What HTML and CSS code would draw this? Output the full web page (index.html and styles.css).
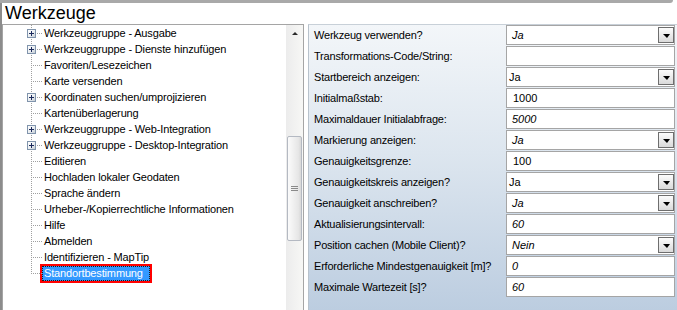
FILE: index.html
```html
<!DOCTYPE html>
<html>
<head>
<meta charset="utf-8">
<link rel="stylesheet" href="styles.css">
</head>
<body>
<div class="topline"></div>
<div class="frame">
  <div class="title">Werkzeuge</div>
  <div class="main">
    <div class="tree">
      <ul class="nodes">
        <li class="node"><span class="pm"></span><span class="lbl">Werkzeuggruppe - Ausgabe</span></li>
        <li class="node"><span class="pm"></span><span class="lbl">Werkzeuggruppe - Dienste hinzufügen</span></li>
        <li class="node leaf"><span class="lbl">Favoriten/Lesezeichen</span></li>
        <li class="node leaf"><span class="lbl">Karte versenden</span></li>
        <li class="node"><span class="pm"></span><span class="lbl">Koordinaten suchen/umprojizieren</span></li>
        <li class="node leaf"><span class="lbl">Kartenüberlagerung</span></li>
        <li class="node"><span class="pm"></span><span class="lbl">Werkzeuggruppe - Web-Integration</span></li>
        <li class="node"><span class="pm"></span><span class="lbl">Werkzeuggruppe - Desktop-Integration</span></li>
        <li class="node leaf"><span class="lbl">Editieren</span></li>
        <li class="node leaf"><span class="lbl">Hochladen lokaler Geodaten</span></li>
        <li class="node leaf"><span class="lbl">Sprache ändern</span></li>
        <li class="node leaf"><span class="lbl">Urheber-/Kopierrechtliche Informationen</span></li>
        <li class="node leaf"><span class="lbl">Hilfe</span></li>
        <li class="node leaf"><span class="lbl">Abmelden</span></li>
        <li class="node leaf"><span class="lbl">Identifizieren - MapTip</span></li>
        <li class="node leaf last"><span class="lbl sel">Standortbestimmung</span></li>
      </ul>
      <div class="vscroll">
        <div class="arrow-up"></div>
        <div class="thumb"><div class="grip"></div></div>
      </div>
    </div>
    <div class="props">
      <div class="row"><div class="label">Werkzeug verwenden?</div><div class="value"><span class="txt it">Ja</span><span class="btn"></span></div></div>
      <div class="row"><div class="label">Transformations-Code/String:</div><div class="value"></div></div>
      <div class="row"><div class="label">Startbereich anzeigen:</div><div class="value"><span class="txt dn">Ja</span><span class="btn"></span></div></div>
      <div class="row"><div class="label">Initialmaßstab:</div><div class="value"><span class="txt nm">1000</span></div></div>
      <div class="row"><div class="label">Maximaldauer Initialabfrage:</div><div class="value"><span class="txt it">5000</span></div></div>
      <div class="row"><div class="label">Markierung anzeigen:</div><div class="value"><span class="txt it">Ja</span><span class="btn"></span></div></div>
      <div class="row"><div class="label">Genauigkeitsgrenze:</div><div class="value"><span class="txt nm">100</span></div></div>
      <div class="row"><div class="label">Genauigkeitskreis anzeigen?</div><div class="value"><span class="txt dn">Ja</span><span class="btn"></span></div></div>
      <div class="row"><div class="label">Genauigkeit anschreiben?</div><div class="value"><span class="txt it">Ja</span><span class="btn"></span></div></div>
      <div class="row"><div class="label">Aktualisierungsintervall:</div><div class="value"><span class="txt it">60</span></div></div>
      <div class="row"><div class="label">Position cachen (Mobile Client)?</div><div class="value"><span class="txt it">Nein</span><span class="btn"></span></div></div>
      <div class="row"><div class="label">Erforderliche Mindestgenauigkeit [m]?</div><div class="value"><span class="txt it">0</span></div></div>
      <div class="row"><div class="label">Maximale Wartezeit [s]?</div><div class="value"><span class="txt it">60</span></div></div>
    </div>
  </div>
</div>
</body>
</html>
```
FILE: styles.css
```css
html, body {
  margin: 0;
  padding: 0;
}
body {
  width: 677px;
  height: 310px;
  overflow: hidden;
  background: #ffffff;
  font-family: "Liberation Sans", Arial, sans-serif;
  color: #000;
}
.topline {
  height: 3px;
  margin-right: 4px;
  background: #a9a9a9;
  border-bottom-right-radius: 3px;
}
.frame {
  height: 307px;
  border-left: 2px solid #8c8c8c;
  box-sizing: border-box;
  display: flex;
  flex-direction: column;
}
.title {
  height: 21px;
  line-height: 21px;
  padding-left: 3px;
  font-size: 18px;
  flex: none;
}
.main {
  flex: 1;
  display: flex;
  min-height: 0;
}
.tree {
  width: 302px;
  box-sizing: border-box;
  border: 1px solid #a5a5a5;
  border-bottom: none;
  display: flex;
  flex: none;
}
.nodes {
  list-style: none;
  margin: 0;
  padding: 0;
  flex: 1;
  font-size: 11px;
  letter-spacing: -0.15px;
}
.node {
  position: relative;
  height: 16px;
  padding-left: 39px;
  padding-top: 1px;
  box-sizing: border-box;
}
.node::before {
  content: "";
  position: absolute;
  left: 28px;
  top: 0;
  width: 1px;
  height: 16px;
  background: repeating-linear-gradient(to bottom, #a0a0a0 0 1px, transparent 1px 2px);
}
.node.last::before {
  height: 9px;
}
.node::after {
  content: "";
  position: absolute;
  left: 29px;
  top: 8px;
  width: 11px;
  height: 1px;
  background: repeating-linear-gradient(to right, transparent 0 1px, #a0a0a0 1px 2px);
}
.pm {
  position: absolute;
  left: 24px;
  top: 4px;
  width: 9px;
  height: 9px;
  box-sizing: border-box;
  border: 1px solid #8094ac;
  background: linear-gradient(135deg, #ffffff 0%, #e9edf0 55%, #c4ccd4 100%);
  z-index: 1;
}
.pm::before {
  content: "";
  position: absolute;
  left: 1px;
  top: 3px;
  width: 5px;
  height: 1px;
  background: #1c2a5c;
}
.pm::after {
  content: "";
  position: absolute;
  left: 3px;
  top: 1px;
  width: 1px;
  height: 5px;
  background: #1c2a5c;
}
.lbl {
  display: inline-block;
  height: 15px;
  line-height: 15px;
  padding: 0 2px;
  box-sizing: border-box;
  white-space: nowrap;
}
.lbl.sel {
  width: 108px;
  background: #3399ff;
  color: #ffffff;
  outline: 2px solid #ff0000;
  border: 1px dotted #1a1a1a;
  line-height: 13px;
  padding-left: 1px;
}
.vscroll {
  width: 17px;
  flex: none;
  background: linear-gradient(to right, #ececec, #f7f7f5);
  display: flex;
  flex-direction: column;
  align-items: center;
}
.arrow-up {
  height: 17px;
  width: 17px;
  display: flex;
  align-items: center;
  justify-content: center;
  flex: none;
}
.arrow-up::after {
  content: "";
  width: 0;
  height: 0;
  border-left: 3px solid transparent;
  border-right: 3px solid transparent;
  border-bottom: 3px solid #2a2a2a;
}
.thumb {
  margin-top: 94px;
  width: 15px;
  height: 105px;
  box-sizing: border-box;
  border: 1px solid #b4b9c2;
  border-radius: 2px;
  background: linear-gradient(to right, #fbfbfb, #e6e6e6 80%, #d8d8d8);
  display: flex;
  align-items: center;
  justify-content: center;
  flex: none;
}
.grip {
  width: 7px;
  height: 5px;
  background: repeating-linear-gradient(to bottom, #8a8a8a 0 1px, transparent 1px 2px);
}
.props {
  flex: 1;
  margin-left: 4px;
  border-left: 1px solid #b8c2cc;
  border-top: 1px solid #c8d0d8;
  background: linear-gradient(to bottom, #f3f6f9 0%, #dde6ef 45%, #bccde0 100%);
  font-size: 11px;
}
.row {
  display: flex;
  height: 20px;
  margin-bottom: 1px;
}
.label {
  width: 197px;
  flex: none;
  padding-left: 5px;
  box-sizing: border-box;
  line-height: 20px;
  white-space: nowrap;
  letter-spacing: -0.2px;
}
.value {
  width: 169px;
  flex: none;
  box-sizing: border-box;
  border: 1px solid #a5a5a5;
  background: #ffffff;
  display: flex;
  align-items: center;
}
.txt {
  white-space: nowrap;
}
.txt.it {
  font-style: italic;
  padding-left: 5px;
}
.txt.dn {
  padding-left: 2px;
}
.txt.nm {
  padding-left: 6px;
}
.btn {
  margin-left: auto;
  margin-right: 0;
  width: 16px;
  height: 16px;
  box-sizing: border-box;
  border: 1px solid #6e6e6e;
  background: linear-gradient(to bottom, #fcfcfc, #dadada);
  display: flex;
  align-items: center;
  justify-content: center;
}
.btn::after {
  content: "";
  width: 0;
  height: 0;
  margin-top: 2px;
  border-left: 4px solid transparent;
  border-right: 3px solid transparent;
  border-top: 4px solid #000;
}
```
